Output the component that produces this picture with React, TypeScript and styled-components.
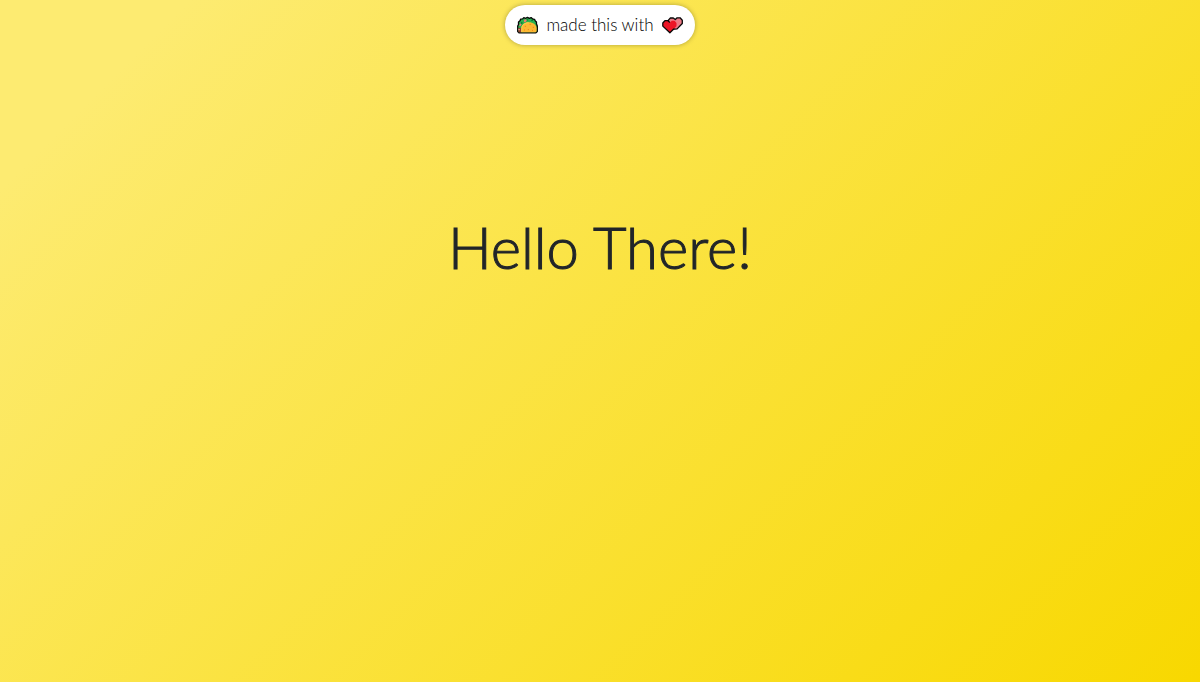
import React from 'react';
import styled, { createGlobalStyle } from 'styled-components';

const GlobalStyle = createGlobalStyle`
  * { box-sizing: border-box; }
  html { min-height: 100%; }
  body {
    margin: 0;
    min-height: 100vh;
    color: #212529;
    font-family: Lato, 'Open Sans', sans-serif;
    font-weight: 300;
    background: linear-gradient(135deg, #fdeb71 10%, #f8d800 100%) no-repeat;
  }
`;

const Page = styled.div`
  min-height: 100vh;
  display: flex;
  flex-direction: column;
  align-items: center;
  padding-top: 5px;
`;

const Badge = styled.header`
  display: flex;
  align-items: center;
  gap: 8px;
  height: 40px;
  padding: 0 12px;
  border-radius: 20px;
  background: #fff;
  box-shadow: 0 0 5px rgba(0, 0, 0, 0.3);
  color: #000;
  font-size: 17px;
  line-height: 24px;
  white-space: nowrap;
`;

const Icon = styled.svg`
  flex: none;
  width: 21px;
  height: 21px;
`;

const Main = styled.main`
  padding: 168px 16px 32px;
  text-align: center;
`;

const Title = styled.h1`
  margin: 0;
  font-size: 58px;
  line-height: 68px;
  font-weight: 300;
  -webkit-text-stroke: 1px #212529;
  stroke-linejoin: round;
`;

const Taco = () => (
  <Icon viewBox="0 0 21 21" role="img" aria-label="Taco">
    <path d="M.7 16.5V11l.8-1.5V7L3 5.8l.6-1.6 2-.3 1.2-1.2 2 .6 1.6-1 2 1 1.7-.7 1.6 1.4 1.8.3.8 1.6 1.2 1-.1 1.7.9 2.4v5.5L18.9 17.8H2z" fill="#2bb350" stroke="#080808" strokeWidth="1.3" strokeLinejoin="round" />
    <path d="M4 7.3h1.4v1.5H4zM9.7 4.3h1.5v1.3H9.7zM14.3 4.8h1.5V6h-1.5z" fill="#0b7135" />
    <path d="M6.8 5.7 8 4.2l1.8.9-.9 1.6-1.6.5zM2.3 10l1-1.5 1.2.8-.8 1.7H2.4z" fill="#f47772" />
    <path d="M1.4 12.8h3V17.2h-3z" fill="#943e2b" />
    <path d="M1.4 14h1.4v1.2H1.4z" fill="#f3a19b" />
    <path d="M4.3 17.2v-3.6c0-3.6 3-6.3 7.4-6.3s7.9 2.7 7.9 6.3v2.7l-.9.9z" fill="#fcb832" />
    <path d="M7.8 11.3h1.2M12.6 9.4h1.2M15.8 12.3h1.2M10.8 14.6H12M7 15h1M15 15.4h1" stroke="#f08419" strokeWidth="1" />
    <path d="M4.7 17v-3.4c0-3.4 2.8-5.9 7-5.9" fill="none" stroke="#ffd65a" strokeWidth=".8" />
  </Icon>
);

const Hearts = () => (
  <Icon viewBox="0 0 21 21" role="img" aria-label="Two hearts">
    <path d="M12.6 14.2 6.4 8.7V5.1l2-2.1h2.9l2 1.5 1.8-1.7h3l2.2 2.4v3.3l-5.2 5.4z" fill="#ec7b86" stroke="#080808" strokeWidth="1.3" strokeLinejoin="round" />
    <path d="M7.9 17.8.8 11.1V8l2.1-2.3h3l2 1.7 2-1.7h2.7l1.9 2.2v3.3z" fill="#ec1526" />
    <path d="m12 13.8-4.1 4L.8 11.1V8l2.1-2.3h3l2 1.7" fill="none" stroke="#080808" strokeWidth="1.3" strokeLinejoin="round" />
  </Icon>
);

export default function App() {
  return (
    <>
      <GlobalStyle />
      <Page>
        <Badge>
          <Taco />
          <span>made this with</span>
          <Hearts />
        </Badge>
        <Main>
          <Title>Hello There!</Title>
        </Main>
      </Page>
    </>
  );
}
